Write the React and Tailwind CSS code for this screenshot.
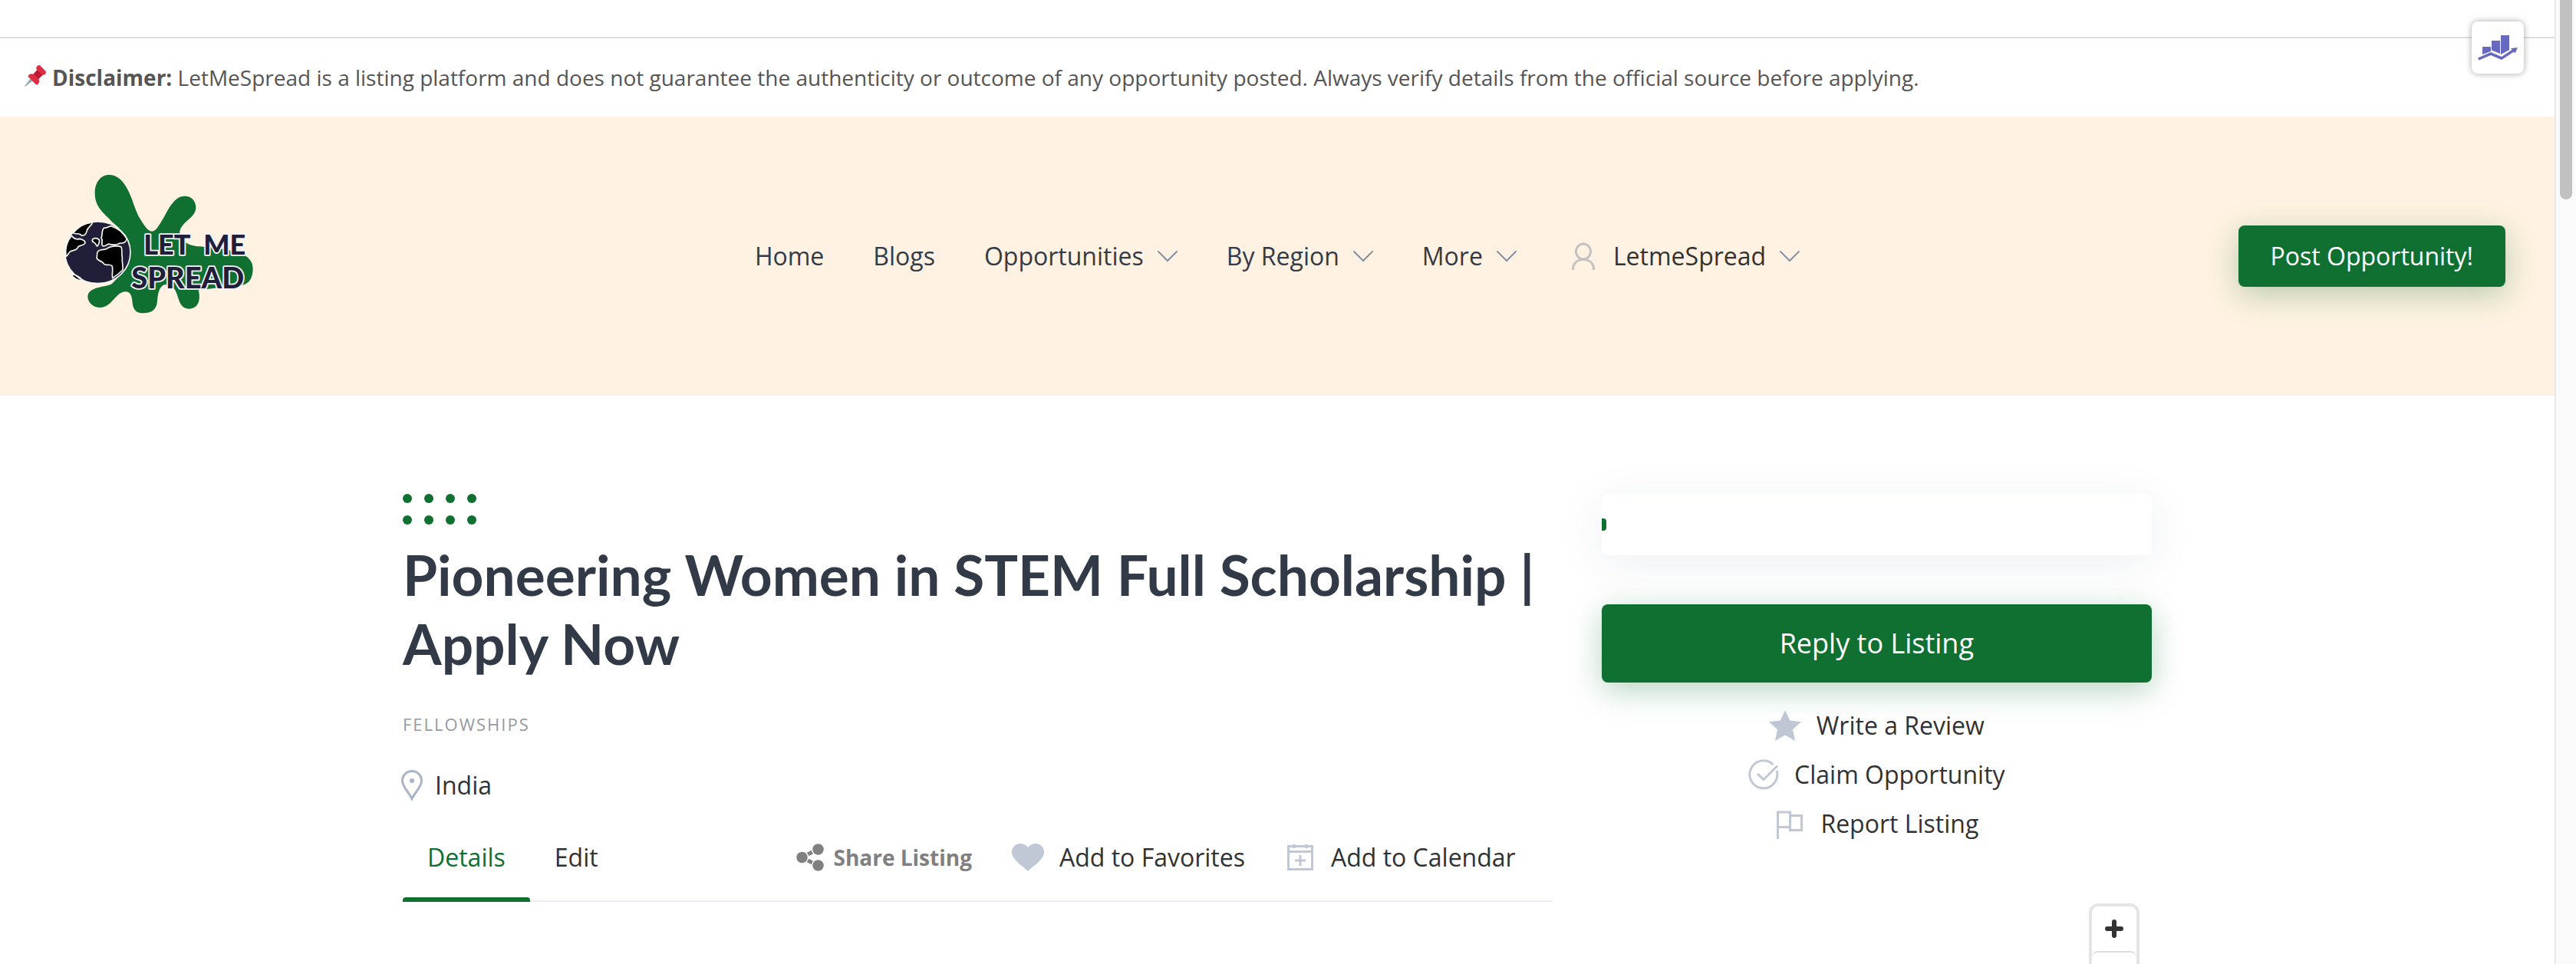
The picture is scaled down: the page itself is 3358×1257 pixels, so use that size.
import React from "react";

const menu = [
  { label: "Home" },
  { label: "Blogs" },
  { label: "Opportunities", dropdown: true },
  { label: "By Region", dropdown: true },
  { label: "More", dropdown: true },
];

function Chevron() {
  return (
    <svg viewBox="0 0 26 16" fill="none" stroke="#8390a3" strokeWidth="2" strokeLinecap="round" className="h-4 w-[26px]">
      <path d="M1 2l12 12L25 2" />
    </svg>
  );
}

function PinIcon() {
  return (
    <svg viewBox="0 0 28 28" className="-mt-1 h-7 w-7 shrink-0">
      <path fill="#99aab5" d="M7.5 17.5l3 3L.6 28 0 27.4z" />
      <path fill="#dd2e44" d="M5 13.5c1.500-2.500 4.500-3 7.500-1.500l6 6c1.200 3 .7 5.500-1.500 7.200-1 .6-1.800.2-2.600-.5l-9-9c-.6-.7-.8-1.400-.4-2.200z" />
      <path fill="#be1931" d="M11.500 11.500l5.500-6 7 7-5.800 5.700z" />
      <path fill="#dd2e44" d="M15.500 2.500c1-1.800 3-3 4.600-2.200L27.600 8c.9 1.800-.3 3.700-2 4.600-1.200.6-2.300.4-3.200-.4L16 5.700c-.9-.9-1-2.100-.5-3.200z" />
    </svg>
  );
}

function Logo() {
  return (
    <svg viewBox="16 42 888 660" className="h-[220px] w-[296px]" role="img" aria-label="Let Me Spread">
      <path
        fill="#0f7031"
        d="M250 54C280 54 300 72 318 102C342 142 352 196 372 226C388 252 402 275 418 275C436 275 448 246 464 222C484 186 506 137 546 137C574 137 590 156 590 182C590 224 528 238 527 280C530 318 566 332 604 334C650 338 700 340 740 356C790 362 813 390 813 420C813 462 794 484 768 485L600 505C610 540 600 578 564 578C520 576 526 530 506 500C492 480 480 480 466 484C446 492 441 520 439 550C436 580 418 595 386 595C350 595 344 576 341 545C338 520 330 511 314 511C276 512 262 573 216 573C188 573 167 552 167 530C170 490 232 496 262 480L300 440L290 262L262 238C238 208 194 186 195 124C195 84 218 54 250 54Z"
      />
      <ellipse cx="206" cy="358" rx="128" ry="121" fill="#211e3a" />
      <g fill="#000" stroke="#f3f8ee" strokeWidth="5" strokeLinejoin="round">
        <path d="M110 281C132 256 158 242 185 240C184 254 168 256 164 272C160 290 150 294 142 290C134 280 120 288 110 281Z" />
        <path d="M82 374C77 340 86 314 104 292C112 304 122 308 136 304C150 308 160 314 156 322C150 332 132 328 128 338C124 350 110 348 98 354C92 360 90 368 82 374Z" />
        <path d="M186 306C196 300 206 302 212 308C214 316 210 328 204 333C198 330 200 320 190 318C184 314 184 310 186 306Z" />
        <path d="M220 300C226 290 220 272 230 262C242 262 248 256 258 254C284 262 306 280 320 304C318 318 304 322 290 322C282 332 262 326 254 326C248 318 238 336 226 332C216 326 230 314 220 300Z" />
        <path d="M208 352C222 342 236 350 246 340C260 332 286 330 298 336C304 350 298 362 302 376C300 392 306 408 304 426C290 440 276 450 264 458C260 440 268 424 262 410C250 400 240 412 230 402C224 388 206 394 202 378C206 370 200 360 208 352Z" />
        <path d="M102 444C114 444 124 446 130 452C140 456 144 460 142 468C126 466 112 458 102 444Z" />
      </g>
      <ellipse cx="206" cy="358" rx="128" ry="121" fill="none" stroke="#f7f7f4" strokeWidth="5" />
      <g
        fill="#211e3a"
        stroke="#f4f4f8"
        strokeWidth="11"
        strokeLinejoin="round"
        paintOrder="stroke"
        className="font-['Lato',sans-serif] font-black"
      >
        <text x="386" y="365" fontSize="108">LET</text>
        <text x="620" y="365" fontSize="108">ME</text>
        <text x="338" y="498" fontSize="114">SPREAD</text>
      </g>
    </svg>
  );
}

function UserIcon() {
  return (
    <svg viewBox="0 0 30 36" fill="none" stroke="#c2c2c2" strokeWidth="3" className="h-9 w-[30px]">
      <ellipse cx="15" cy="12" rx="9.500" ry="10" />
      <path d="M1.500 36C1.500 27 7 22.500 15 22.500S28.500 27 28.500 36" />
    </svg>
  );
}

function StarIcon() {
  return (
    <svg viewBox="0 0 42 40" fill="#bfc6d4" className="h-10 w-[42px]">
      <path d="M21 0l6.200 13.500L42 15.200 31 25.200 34 40l-13-7.400L8 40l3-14.800L0 15.200l14.800-1.700z" />
    </svg>
  );
}

function CheckIcon() {
  return (
    <svg viewBox="0 0 40 40" fill="none" stroke="#c1c8d5" strokeWidth="3" className="h-10 w-10">
      <path d="M32.500 7A18 18 0 1 0 37.200 15" />
      <path d="M12 19l8 7.500L38 8.500" />
    </svg>
  );
}

function FlagIcon() {
  return (
    <svg viewBox="0 0 40 40" fill="none" stroke="#c1c8d5" strokeWidth="3" className="h-10 w-10">
      <path d="M4.500 40V5h16v19.500h-16M20.500 9.500h15v19h-15v-6" />
    </svg>
  );
}

function HeartIcon() {
  return (
    <svg viewBox="0 0 42 36" fill="#c1c8d5" className="h-9 w-[42px]">
      <path d="M21 36C14 29 0 21 0 11 0 4.500 5 0 11 0c4.500 0 8 2 10 5 2-3 5.500-5 10-5 6 0 11 4.500 11 11 0 10-14 18-21 25z" />
    </svg>
  );
}

function CalendarIcon() {
  return (
    <svg viewBox="0 0 40 40" fill="none" stroke="#c1c8d5" strokeWidth="3" className="h-10 w-10">
      <path d="M4.500 5.500h31v30h-31zM3 12.500h34M12 3v5M28 3v5M20 17v14M13 24h14" />
    </svg>
  );
}

function ShareIcon() {
  return (
    <svg viewBox="0 0 36 36" fill="#808080" className="h-9 w-9">
      <path d="M7 18L29 7M7 18l22 11" stroke="#808080" strokeWidth="5" />
      <g stroke="#fff" strokeWidth="1.500">
        <circle cx="7.500" cy="18" r="8" />
        <circle cx="28.500" cy="7.500" r="8" />
        <circle cx="28.500" cy="28.500" r="8" />
      </g>
    </svg>
  );
}

function LocationIcon() {
  return (
    <svg viewBox="0 0 28 40" fill="none" className="h-10 w-7">
      <path d="M14 37.500C10 29 1.500 22 1.500 14a12.500 12.500 0 0 1 25 0C26.500 22 18 29 14 37.500z" stroke="#a9b4c7" strokeWidth="3" />
      <circle cx="14" cy="14" r="3" fill="#a9b4c7" />
    </svg>
  );
}

function ChartIcon() {
  return (
    <svg viewBox="0 0 52 34" fill="#6769c0" className="h-[34px] w-[52px]">
      <path d="M6 16h11v6L6 26zM18 8h11v17l-11-4.500zM30 1h11v19l-11 6z" />
      <path d="M0 30.500l17-7.500 14 6 13.500-9-1.500-2 9-1-3.500 7.500-1.500-2L31 33l-14-6L1.500 33.500z" />
    </svg>
  );
}

function Header() {
  return (
    <header className="grid h-[364px] grid-cols-[1fr_auto_1fr] items-center bg-[#fff2e2] px-16">
      <a href="#" className="justify-self-start">
        <Logo />
      </a>
      <nav className="flex items-center gap-16 text-[32px] leading-[48px] text-[#343b47]">
        {menu.map((item) => (
          <a key={item.label} href="#" className="flex items-center gap-[18px]">
            {item.label}
            {item.dropdown && <Chevron />}
          </a>
        ))}
        <a href="#" className="ml-2 flex items-center gap-[18px] text-[#323232]">
          <span className="flex items-center gap-6">
            <UserIcon />
            LetmeSpread
          </span>
          <Chevron />
        </a>
      </nav>
      <button className="h-20 justify-self-end rounded-lg bg-[#0f7031] px-[42px] text-[32px] font-medium text-white shadow-[0_10px_40px_rgba(15,112,49,0.3)]">
        Post Opportunity!
      </button>
    </header>
  );
}

function Listing() {
  return (
    <section className="col-span-8">
      <div className="grid w-fit grid-cols-4 gap-4">
        {[...Array(8)].map((_, i) => (
          <span key={i} className="h-3 w-3 rounded-full bg-[#0f7031]"></span>
        ))}
      </div>
      <h1 className="mt-5 font-['Lato',sans-serif] text-[73px] leading-[90px] font-bold text-[#323a48]">
        Pioneering Women in STEM Full Scholarship | Apply Now
      </h1>
      <a href="#" className="mt-11 block text-[22px] leading-8 tracking-[2px] text-[#96999f]">
        FELLOWSHIPS
      </a>
      <a href="#" className="-ml-0.5 mt-10 flex items-center gap-4 text-[32px] leading-[48px]">
        <LocationIcon />
        India
      </a>
      <div className="mt-[46px] flex justify-between border-b-2 border-[#ececf2] text-[32px] leading-[48px]">
        <nav className="flex">
          <a href="#" className="relative px-8 pb-8 text-[#0f7031]">
            Details
            <span className="absolute inset-x-0 -bottom-0.5 h-1.5 rounded-t bg-[#0f7031]"></span>
          </a>
          <a href="#" className="px-8">
            Edit
          </a>
        </nav>
        <div className="flex h-12 items-center gap-[52px] pr-12">
          <button className="flex items-center gap-3 text-[28px] font-bold text-[#808080]">
            <ShareIcon />
            Share Listing
          </button>
          <button className="flex items-center gap-5">
            <HeartIcon />
            Add to Favorites
          </button>
          <button className="flex items-center gap-5">
            <CalendarIcon />
            Add to Calendar
          </button>
        </div>
      </div>
    </section>
  );
}

function Sidebar() {
  return (
    <aside className="col-span-4">
      <div className="flex h-20 items-center overflow-hidden rounded-lg bg-white shadow-[0_10px_60px_rgba(30,50,90,0.08)]">
        <span className="h-4 w-1.5 rounded-r bg-[#0f7031]"></span>
      </div>
      <button className="mt-16 h-[102px] w-full rounded-lg bg-[#0f7031] text-[36px] font-medium text-white shadow-[0_10px_40px_rgba(15,112,49,0.3)]">
        Reply to Listing
      </button>
      <div className="mt-8 flex flex-col items-center gap-4 text-[32px] leading-[48px]">
        <a href="#" className="flex items-center gap-5">
          <StarIcon />
          Write a Review
        </a>
        <a href="#" className="flex items-center gap-5">
          <CheckIcon />
          Claim Opportunity
        </a>
        <a href="#" className="flex items-center gap-5">
          <FlagIcon />
          Report Listing
        </a>
      </div>
      <div className="mt-20 flex justify-end pr-4">
        <div className="flex flex-col rounded-xl border-4 border-[#e5e5e5]">
          <button aria-label="Zoom in" className="flex h-[58px] w-[58px] items-center justify-center">
            <svg viewBox="0 0 24 24" stroke="#333" strokeWidth="6" strokeLinecap="round" className="h-6 w-6">
              <path d="M12 3v18M3 12h18" />
            </svg>
          </button>
          <button aria-label="Zoom out" className="flex h-[58px] w-[58px] items-center justify-center rounded-lg border-t-2 border-[#ddd]">
            <svg viewBox="0 0 24 24" stroke="#333" strokeWidth="6" strokeLinecap="round" className="h-6 w-6">
              <path d="M3 12h18" />
            </svg>
          </button>
        </div>
      </div>
    </aside>
  );
}

export default function App() {
  return (
    <div className="flex h-screen overflow-hidden bg-white font-['Open_Sans',sans-serif] text-[#323232]">
      <div className="relative min-w-0 flex-1">
        <div className="mt-12 flex h-[104px] items-center gap-2 border-t-2 border-[#dedede] px-8 text-[28px] leading-[42px] text-[#555]">
          <PinIcon />
          <p>
            <strong>Disclaimer:</strong> LetMeSpread is a listing platform and does not guarantee the authenticity or
            outcome of any opportunity posted. Always verify details from the official source before applying.
          </p>
        </div>
        <Header />
        <main className="mx-auto grid max-w-[2280px] grid-cols-12 gap-16 pt-32">
          <Listing />
          <Sidebar />
        </main>
        <button
          aria-label="Statistics"
          className="absolute top-7 right-10 flex h-[68px] w-[68px] items-center justify-center rounded-lg bg-white shadow-[0_0_8px_rgba(0,0,0,0.35)]"
        >
          <ChartIcon />
        </button>
      </div>
      <div className="flex w-7 justify-center border-l-2 border-[#e8e8e8] bg-[#fafafa]">
        <div className="h-[260px] w-4 rounded-b-full bg-[#c1c1c1]"></div>
      </div>
    </div>
  );
}
